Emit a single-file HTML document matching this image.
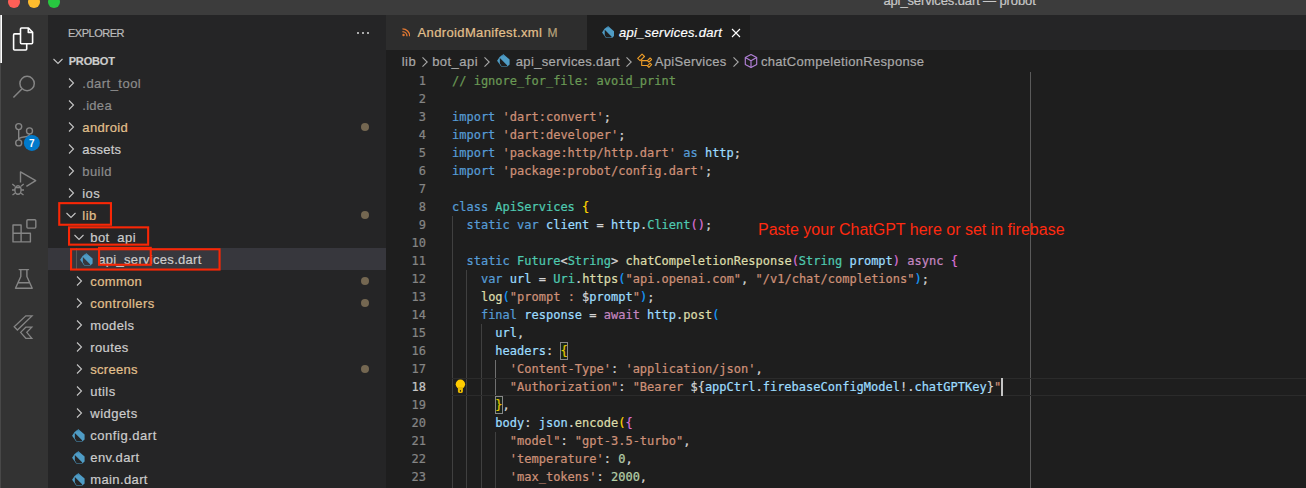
<!DOCTYPE html>
<html><head><meta charset="utf-8"><title>api_services.dart — probot</title>
<style>
*{box-sizing:border-box;margin:0;padding:0}
html,body{width:1306px;height:488px;overflow:hidden;background:#1e1e1e}
body{position:relative;font-family:"Liberation Sans",sans-serif;font-size:13px;color:#ccc;-webkit-text-stroke:0.2px}
.abs{position:absolute}
#titlebar{left:0;top:0;width:1306px;height:15px;background:#3c3c3c}
#title{left:883.4px;top:-7.5px;font-size:13px;line-height:16px;color:#c8c8c8;white-space:nowrap;letter-spacing:-0.12px}
.tl{width:12px;height:12px;border-radius:50%;top:-4px}
#activity{left:0;top:15px;width:48px;height:473px;background:#333333}
#sidebar{left:48px;top:15px;width:338px;height:473px;background:#252526}
#tabs{left:386px;top:15px;width:920px;height:35px;background:#252526}
.tab{top:0;height:35px;line-height:35px;white-space:nowrap}
#editor{left:386px;top:50px;width:920px;height:438px;background:#1e1e1e}
.row{left:0;width:338px;height:22px;line-height:22px;white-space:nowrap}
.row .lbl{position:absolute;top:1px}
.chev{position:absolute;top:3px;width:16px;height:16px}
.dot{position:absolute;left:313px;top:7px;width:8px;height:8px;border-radius:50%;background:#746751}
.g{color:#8c8c8c}.m{color:#e2c08d}.w{color:#cccccc}
#code{left:0;top:22px;width:920px;height:416px;font-family:"DejaVu Sans Mono","Liberation Mono",monospace;font-size:12px;line-height:18px;color:#d4d4d4;white-space:pre;-webkit-text-stroke:0.22px}
.ln{position:absolute;left:0;width:40px;text-align:right;color:#858585;height:18px}
.cl{position:absolute;left:66px;height:18px}
.k{color:#569cd6}.c{color:#c586c0}.s{color:#ce9178}.cm{color:#6a9955}.t{color:#4ec9b0}.f{color:#dcdcaa}.v{color:#9cdcfe}.n{color:#b5cea8}
.b1{color:#ffd700}.b2{color:#da70d6}.b3{color:#179fff}
.bm{outline:1px solid #888;outline-offset:-1px;background:rgba(0,100,0,.1)}
.guide{position:absolute;width:1px;background:#404040}
.bc{position:absolute;top:1px;height:22px;line-height:22px;color:#a9a9a9;white-space:nowrap}
.ann{position:absolute;border:2px solid #ee2c10}
</style></head><body>
<div id="titlebar" class="abs"></div>
<div class="abs tl" style="left:8px;background:#fe5f57"></div>
<div class="abs tl" style="left:28px;background:#febc2e"></div>
<div class="abs tl" style="left:48px;background:#28c840"></div>
<div id="title" class="abs">api_services.dart — probot</div>
<div id="activity" class="abs">
<div class="abs" style="left:0;top:0;width:1px;height:473px;background:#484848"></div><div class="abs" style="left:0;top:0;width:1px;height:48px;background:#c8c8c8"></div><div class="abs" style="left:1px;top:0;width:1px;height:48px;background:#fff"></div>
<svg class="abs" style="left:0;top:-15px" width="48" height="488" viewBox="0 0 48 488" fill="none">
<g stroke="#ffffff" stroke-width="1.6" stroke-linejoin="round"><path d="M21.5 28 H28.5 L32.6 32.2 V42.7 a1 1 0 0 1 -1 1 H21.5 a1 1 0 0 1 -1 -1 V29 a1 1 0 0 1 1 -1 Z"/><path d="M28.3 28 V32.4 H32.6"/><path d="M20.5 33.9 H14.6 a1 1 0 0 0 -1 1 V49 a1 1 0 0 0 1 1 H25.7 a1 1 0 0 0 1 -1 V43.7"/></g>
<g stroke="#858585" stroke-width="1.5"><circle cx="27.1" cy="83.5" r="7.2"/><path d="M21.9 88.9 L13.4 97.6"/></g>
<g stroke="#858585" stroke-width="1.4"><circle cx="18.7" cy="126.6" r="3"/><circle cx="18.7" cy="142.9" r="3"/><circle cx="29.5" cy="130.9" r="3"/><path d="M18.7 129.6 V139.9 M29.5 133.9 C29.5 138.8 18.7 135.2 18.7 139.9"/></g>
<circle cx="31.9" cy="142.9" r="8" fill="#007acc"/>
<text x="31.9" y="146.5" text-anchor="middle" font-family="Liberation Sans, sans-serif" font-size="10" font-weight="bold" fill="#ffffff">7</text>
<g stroke="#858585" stroke-width="1.4" stroke-linejoin="round"><path d="M20.5 182.5 V171.9 L35.7 180.6 L26.4 186.4"/><ellipse cx="18" cy="190" rx="3.1" ry="4.2"/><path d="M15.6 187.6 H20.4"/><path d="M15 186.2 L12.3 184 M21 186.2 L23.7 184 M14.9 190 H12 M21.1 190 H24 M15.3 193 L12.5 195 M20.7 193 L23.5 195"/></g>
<g stroke="#858585" stroke-width="1.4" stroke-linejoin="round"><path d="M13 225 H21.1 V233.2 H30.4 V241.9 H13 Z M13 233.2 H21.1 V241.9"/><rect x="26.9" y="219.7" width="8.9" height="8.4" rx="1"/></g>
<g stroke="#858585" stroke-width="1.4" stroke-linejoin="round" stroke-linecap="round"><path d="M19.2 269.6 H28.5 M20.8 269.6 V276.5 L15.5 288.2 H32.2 L26.9 276.5 V269.6 M18 282.8 H29.7"/></g>
<g stroke="#858585" stroke-width="1.3" stroke-linejoin="miter"><path d="M14.2 326.8 L25.8 315.9 H32 L17.4 330 Z"/><path d="M20.6 332.4 L25.8 327.2 H31.8 L26.8 332.4 L31.8 338.3 H25.8 Z"/></g>
</svg>
</div>
<div id="sidebar" class="abs">
<div class="abs" style="left:20px;top:10px;font-size:11px;line-height:16px;color:#bbbbbb;letter-spacing:-0.5px">EXPLORER</div>
<div class="abs" style="left:308.8px;top:16.9px;width:14px;height:4px"><i class="abs" style="left:0;top:0;width:2.4px;height:2.4px;border-radius:30%;background:#c5c5c5"></i><i class="abs" style="left:5px;top:0;width:2.4px;height:2.4px;border-radius:30%;background:#c5c5c5"></i><i class="abs" style="left:10px;top:0;width:2.4px;height:2.4px;border-radius:30%;background:#c5c5c5"></i></div>
<div class="abs row" style="top:35px"><svg class="chev" style="left:2px" viewBox="0 0 16 16"><path d="M3.5 6 L8 10.5 L12.5 6" fill="none" stroke="#c5c5c5" stroke-width="1.1"/></svg><span class="lbl" style="left:20.7px;top:0;font-size:11px;font-weight:bold;color:#cccccc;letter-spacing:-0.17px">PROBOT</span></div>
<div class="abs row" style="top:57px"><svg class="chev" style="left:15px" viewBox="0 0 16 16"><path d="M6 3.5 L10.5 8 L6 12.5" fill="none" stroke="#c5c5c5" stroke-width="1.1"/></svg><span class="lbl g" style="left:34.3px;letter-spacing:0.47px">.dart_tool</span></div>
<div class="abs row" style="top:79px"><svg class="chev" style="left:15px" viewBox="0 0 16 16"><path d="M6 3.5 L10.5 8 L6 12.5" fill="none" stroke="#c5c5c5" stroke-width="1.1"/></svg><span class="lbl g" style="left:34.3px;letter-spacing:0.28px">.idea</span></div>
<div class="abs row" style="top:101px"><svg class="chev" style="left:15px" viewBox="0 0 16 16"><path d="M6 3.5 L10.5 8 L6 12.5" fill="none" stroke="#c5c5c5" stroke-width="1.1"/></svg><span class="lbl m" style="left:34.3px;letter-spacing:0.35px">android</span><i class="dot"></i></div>
<div class="abs row" style="top:123px"><svg class="chev" style="left:15px" viewBox="0 0 16 16"><path d="M6 3.5 L10.5 8 L6 12.5" fill="none" stroke="#c5c5c5" stroke-width="1.1"/></svg><span class="lbl w" style="left:34.3px;letter-spacing:0.24px">assets</span></div>
<div class="abs row" style="top:145px"><svg class="chev" style="left:15px" viewBox="0 0 16 16"><path d="M6 3.5 L10.5 8 L6 12.5" fill="none" stroke="#c5c5c5" stroke-width="1.1"/></svg><span class="lbl g" style="left:34.3px;letter-spacing:0.43px">build</span></div>
<div class="abs row" style="top:167px"><svg class="chev" style="left:15px" viewBox="0 0 16 16"><path d="M6 3.5 L10.5 8 L6 12.5" fill="none" stroke="#c5c5c5" stroke-width="1.1"/></svg><span class="lbl w" style="left:34.3px;letter-spacing:0.39px">ios</span></div>
<div class="abs row" style="top:189px"><svg class="chev" style="left:15px" viewBox="0 0 16 16"><path d="M3.5 6 L8 10.5 L12.5 6" fill="none" stroke="#c5c5c5" stroke-width="1.1"/></svg><span class="lbl m" style="left:34.3px;letter-spacing:0.46px">lib</span><i class="dot"></i></div>
<div class="abs row" style="top:211px"><svg class="chev" style="left:23px" viewBox="0 0 16 16"><path d="M3.5 6 L8 10.5 L12.5 6" fill="none" stroke="#c5c5c5" stroke-width="1.1"/></svg><span class="lbl w" style="left:42.3px;letter-spacing:0.43px">bot_api</span></div>
<div class="abs row" style="top:233px;background:#37373d"><i class="abs" style="left:28px;top:0;width:1px;height:22px;background:#585858"></i><svg class="abs" style="left:31.5px;top:4.5px" width="13.0" height="13.0" viewBox="0 0 13 13"><path fill-rule="evenodd" fill="#4f9cc5" d="M6.45 0.3 L12.6 5.6 L12.6 10.4 L10.3 12.6 L4.2 12.5 L0.1 6.8 L2.6 2.9 Z M2.85 4.0 L10.3 11.5 L9.9 11.95 L4.5 11.9 L2.85 9.6 Z"/><path fill="#3b7fa6" d="M6.45 0.3 L8.6 2.2 L5.2 2.2 L3.6 1.9 Z" opacity="0.6"/></svg><span class="lbl w" style="left:50.3px;letter-spacing:0.30px">api_services.dart</span></div>
<div class="abs row" style="top:255px"><svg class="chev" style="left:23px" viewBox="0 0 16 16"><path d="M6 3.5 L10.5 8 L6 12.5" fill="none" stroke="#c5c5c5" stroke-width="1.1"/></svg><span class="lbl m" style="left:42.3px;letter-spacing:0.34px">common</span><i class="dot"></i></div>
<div class="abs row" style="top:277px"><svg class="chev" style="left:23px" viewBox="0 0 16 16"><path d="M6 3.5 L10.5 8 L6 12.5" fill="none" stroke="#c5c5c5" stroke-width="1.1"/></svg><span class="lbl m" style="left:42.3px;letter-spacing:0.39px">controllers</span><i class="dot"></i></div>
<div class="abs row" style="top:299px"><svg class="chev" style="left:23px" viewBox="0 0 16 16"><path d="M6 3.5 L10.5 8 L6 12.5" fill="none" stroke="#c5c5c5" stroke-width="1.1"/></svg><span class="lbl w" style="left:42.3px;letter-spacing:0.35px">models</span></div>
<div class="abs row" style="top:321px"><svg class="chev" style="left:23px" viewBox="0 0 16 16"><path d="M6 3.5 L10.5 8 L6 12.5" fill="none" stroke="#c5c5c5" stroke-width="1.1"/></svg><span class="lbl w" style="left:42.3px;letter-spacing:0.38px">routes</span></div>
<div class="abs row" style="top:343px"><svg class="chev" style="left:23px" viewBox="0 0 16 16"><path d="M6 3.5 L10.5 8 L6 12.5" fill="none" stroke="#c5c5c5" stroke-width="1.1"/></svg><span class="lbl m" style="left:42.3px;letter-spacing:0.27px">screens</span><i class="dot"></i></div>
<div class="abs row" style="top:365px"><svg class="chev" style="left:23px" viewBox="0 0 16 16"><path d="M6 3.5 L10.5 8 L6 12.5" fill="none" stroke="#c5c5c5" stroke-width="1.1"/></svg><span class="lbl w" style="left:42.3px;letter-spacing:0.44px">utils</span></div>
<div class="abs row" style="top:387px"><svg class="chev" style="left:23px" viewBox="0 0 16 16"><path d="M6 3.5 L10.5 8 L6 12.5" fill="none" stroke="#c5c5c5" stroke-width="1.1"/></svg><span class="lbl w" style="left:42.3px;letter-spacing:0.47px">widgets</span></div>
<div class="abs row" style="top:409px"><svg class="abs" style="left:23.5px;top:4.5px" width="13.0" height="13.0" viewBox="0 0 13 13"><path fill-rule="evenodd" fill="#4f9cc5" d="M6.45 0.3 L12.6 5.6 L12.6 10.4 L10.3 12.6 L4.2 12.5 L0.1 6.8 L2.6 2.9 Z M2.85 4.0 L10.3 11.5 L9.9 11.95 L4.5 11.9 L2.85 9.6 Z"/><path fill="#3b7fa6" d="M6.45 0.3 L8.6 2.2 L5.2 2.2 L3.6 1.9 Z" opacity="0.6"/></svg><span class="lbl w" style="left:42.3px;letter-spacing:0.53px">config.dart</span></div>
<div class="abs row" style="top:431px"><svg class="abs" style="left:23.5px;top:4.5px" width="13.0" height="13.0" viewBox="0 0 13 13"><path fill-rule="evenodd" fill="#4f9cc5" d="M6.45 0.3 L12.6 5.6 L12.6 10.4 L10.3 12.6 L4.2 12.5 L0.1 6.8 L2.6 2.9 Z M2.85 4.0 L10.3 11.5 L9.9 11.95 L4.5 11.9 L2.85 9.6 Z"/><path fill="#3b7fa6" d="M6.45 0.3 L8.6 2.2 L5.2 2.2 L3.6 1.9 Z" opacity="0.6"/></svg><span class="lbl w" style="left:42.3px;letter-spacing:0.40px">env.dart</span></div>
<div class="abs row" style="top:453px"><svg class="abs" style="left:23.5px;top:4.5px" width="13.0" height="13.0" viewBox="0 0 13 13"><path fill-rule="evenodd" fill="#4f9cc5" d="M6.45 0.3 L12.6 5.6 L12.6 10.4 L10.3 12.6 L4.2 12.5 L0.1 6.8 L2.6 2.9 Z M2.85 4.0 L10.3 11.5 L9.9 11.95 L4.5 11.9 L2.85 9.6 Z"/><path fill="#3b7fa6" d="M6.45 0.3 L8.6 2.2 L5.2 2.2 L3.6 1.9 Z" opacity="0.6"/></svg><span class="lbl w" style="left:42.3px;letter-spacing:0.37px">main.dart</span></div>
<svg class="abs" style="left:0;top:0" width="338" height="473" viewBox="48 15 338 473" fill="none" stroke="#f92706" stroke-width="2.1"><rect x="59.25" y="203.15" width="51.70" height="21.60"/><rect x="69.05" y="227.35" width="79.10" height="17.30"/><rect x="71.05" y="249.25" width="148.50" height="20.30"/><rect x="99.05" y="247.85" width="51.70" height="16.90"/></svg>
</div>
<div id="tabs" class="abs">
<div class="abs tab" style="left:0;width:201px;background:#2d2d2d"><svg class="abs" style="left:15.6px;top:13.4px" width="8.6" height="8.6" viewBox="0 0 10 10"><circle cx="1.8" cy="8.2" r="1.4" fill="#e37933"/><path d="M0.5 4.2 A5.3 5.3 0 0 1 5.8 9.5 M0.5 1 A8.5 8.5 0 0 1 9 9.5" fill="none" stroke="#e37933" stroke-width="1.6"/></svg><span class="abs" style="left:31.6px;top:0;color:#e2c08d;letter-spacing:0.36px">AndroidManifest.xml</span><span class="abs" style="left:161.4px;top:1px;color:#b7a27b;font-size:12px">M</span></div>
<div class="abs tab" style="left:201px;width:163px;background:#1e1e1e"><svg class="abs" style="left:14.6px;top:10.6px" width="12.5" height="12.5" viewBox="0 0 13 13"><path fill-rule="evenodd" fill="#4f9cc5" d="M6.45 0.3 L12.6 5.6 L12.6 10.4 L10.3 12.6 L4.2 12.5 L0.1 6.8 L2.6 2.9 Z M2.85 4.0 L10.3 11.5 L9.9 11.95 L4.5 11.9 L2.85 9.6 Z"/><path fill="#3b7fa6" d="M6.45 0.3 L8.6 2.2 L5.2 2.2 L3.6 1.9 Z" opacity="0.6"/></svg><span class="abs" style="left:32px;top:0;color:#ffffff;font-style:italic;letter-spacing:0.29px">api_services.dart</span><svg class="abs" style="left:140.5px;top:9.8px" width="16" height="16" viewBox="0 0 16 16"><path d="M4 4 L12 12 M12 4 L4 12" stroke="#ffffff" stroke-width="1.1" fill="none"/></svg></div>
</div>
<div id="editor" class="abs">
<span class="bc" style="left:15.7px;letter-spacing:0.49px">lib</span>
<svg class="abs" style="left:31.4px;top:4px" width="16" height="16" viewBox="0 0 16 16"><path d="M5.5 3.4 L10.2 8 L5.5 12.6" fill="none" stroke="#a8a8a8" stroke-width="1.1"/></svg>
<span class="bc" style="left:46.2px;letter-spacing:0.45px">bot_api</span>
<svg class="abs" style="left:92.9px;top:4px" width="16" height="16" viewBox="0 0 16 16"><path d="M5.5 3.4 L10.2 8 L5.5 12.6" fill="none" stroke="#a8a8a8" stroke-width="1.1"/></svg>
<svg class="abs" style="left:111.2px;top:4.4px" width="13.0" height="13.0" viewBox="0 0 13 13"><path fill-rule="evenodd" fill="#4f9cc5" d="M6.45 0.3 L12.6 5.6 L12.6 10.4 L10.3 12.6 L4.2 12.5 L0.1 6.8 L2.6 2.9 Z M2.85 4.0 L10.3 11.5 L9.9 11.95 L4.5 11.9 L2.85 9.6 Z"/><path fill="#3b7fa6" d="M6.45 0.3 L8.6 2.2 L5.2 2.2 L3.6 1.9 Z" opacity="0.6"/></svg>
<span class="bc" style="left:129.8px;letter-spacing:0.34px">api_services.dart</span>
<svg class="abs" style="left:234.8px;top:4px" width="16" height="16" viewBox="0 0 16 16"><path d="M5.5 3.4 L10.2 8 L5.5 12.6" fill="none" stroke="#a8a8a8" stroke-width="1.1"/></svg>
<svg class="abs" style="left:250.6px;top:3px" width="16" height="16" viewBox="0 0 16 16"><g fill="none" stroke="#ee9d28" stroke-width="1.1" stroke-linejoin="round"><path d="M5.05 1.1 L7.5 3.5 L3.1 7.7 L0.7 5.4 Z"/><path d="M4.7 6.2 V12.5 H10.6 M4.7 7.6 H10.6"/><path d="M13.1 5 L14.6 6.5 L11.9 9.2 L10.4 7.7 Z"/><path d="M13.1 10.2 L14.6 11.7 L11.9 14.4 L10.4 12.9 Z"/></g></svg>
<span class="bc" style="left:268.8px;letter-spacing:0.29px">ApiServices</span>
<svg class="abs" style="left:341.9px;top:4px" width="16" height="16" viewBox="0 0 16 16"><path d="M5.5 3.4 L10.2 8 L5.5 12.6" fill="none" stroke="#a8a8a8" stroke-width="1.1"/></svg>
<svg class="abs" style="left:357.0px;top:3px" width="16" height="16" viewBox="0 0 16 16"><g fill="none" stroke="#b180d7" stroke-width="1.15" stroke-linejoin="round"><path d="M8 1.6 L13.7 4.6 L13.7 11.4 L8 14.6 L2.3 11.4 L2.3 4.6 Z"/><path d="M2.3 4.6 L8 7.8 L13.7 4.6 M8 7.8 V14.6"/></g></svg>
<span class="bc" style="left:374.9px;letter-spacing:0.32px">chatCompeletionResponse</span>
<div id="code" class="abs">
<div class="guide" style="left:643.9px;top:0;height:416px;background:#5a5a5a"></div>
<div class="guide" style="left:66.0px;top:144px;height:288px;background:#404040"></div>
<div class="guide" style="left:80.4px;top:198px;height:234px;background:#404040"></div>
<div class="guide" style="left:94.9px;top:252px;height:180px;background:#404040"></div>
<div class="guide" style="left:109.3px;top:288px;height:36px;background:#707070"></div>
<div class="guide" style="left:109.3px;top:360px;height:72px;background:#404040"></div>
<div class="ln" style="top:0px;color:#858585">1</div>
<div class="cl" style="top:0px"><span class="cm">// ignore_for_file: avoid_print</span></div>
<div class="ln" style="top:18px;color:#858585">2</div>
<div class="ln" style="top:36px;color:#858585">3</div>
<div class="cl" style="top:36px"><span class="k">import</span> <span class="s">'dart:convert'</span>;</div>
<div class="ln" style="top:54px;color:#858585">4</div>
<div class="cl" style="top:54px"><span class="k">import</span> <span class="s">'dart:developer'</span>;</div>
<div class="ln" style="top:72px;color:#858585">5</div>
<div class="cl" style="top:72px"><span class="k">import</span> <span class="s">'package:http/http.dart'</span> <span class="k">as</span> <span class="v">http</span>;</div>
<div class="ln" style="top:90px;color:#858585">6</div>
<div class="cl" style="top:90px"><span class="k">import</span> <span class="s">'package:probot/config.dart'</span>;</div>
<div class="ln" style="top:108px;color:#858585">7</div>
<div class="ln" style="top:126px;color:#858585">8</div>
<div class="cl" style="top:126px"><span class="k">class</span> <span class="t">ApiServices</span> <span class="b1">{</span></div>
<div class="ln" style="top:144px;color:#858585">9</div>
<div class="cl" style="top:144px">  <span class="k">static</span> <span class="k">var</span> <span class="v">client</span> = <span class="v">http</span>.<span class="t">Client</span><span class="b2">()</span>;</div>
<div class="ln" style="top:162px;color:#858585">10</div>
<div class="ln" style="top:180px;color:#858585">11</div>
<div class="cl" style="top:180px">  <span class="k">static</span> <span class="t">Future</span>&lt;<span class="t">String</span>&gt; <span class="f">chatCompeletionResponse</span><span class="b2">(</span><span class="t">String</span> <span class="v">prompt</span><span class="b2">)</span> <span class="c">async</span> <span class="b2">{</span></div>
<div class="ln" style="top:198px;color:#858585">12</div>
<div class="cl" style="top:198px">    <span class="k">var</span> <span class="v">url</span> = <span class="t">Uri</span>.<span class="f">https</span><span class="b3">(</span><span class="s">"api.openai.com"</span>, <span class="s">"/v1/chat/completions"</span><span class="b3">)</span>;</div>
<div class="ln" style="top:216px;color:#858585">13</div>
<div class="cl" style="top:216px">    <span class="f">log</span><span class="b3">(</span><span class="s">"prompt : </span>$<span class="v">prompt</span><span class="s">"</span><span class="b3">)</span>;</div>
<div class="ln" style="top:234px;color:#858585">14</div>
<div class="cl" style="top:234px">    <span class="k">final</span> <span class="v">response</span> = <span class="c">await</span> <span class="v">http</span>.<span class="f">post</span><span class="b3">(</span></div>
<div class="ln" style="top:252px;color:#858585">15</div>
<div class="cl" style="top:252px">      <span class="v">url</span>,</div>
<div class="ln" style="top:270px;color:#858585">16</div>
<div class="cl" style="top:270px">      <span class="v">headers</span>: <span class="b1">{</span></div>
<div class="ln" style="top:288px;color:#858585">17</div>
<div class="cl" style="top:288px">        <span class="s">'Content-Type'</span>: <span class="s">'application/json'</span>,</div>
<div class="ln" style="top:306px;color:#c6c6c6">18</div>
<div class="cl" style="top:306px">        <span class="s">"Authorization"</span>: <span class="s">"Bearer </span>${<span class="v">appCtrl</span>.<span class="v">firebaseConfigModel</span>!.<span class="v">chatGPTKey</span>}<span class="s">"</span></div>
<div class="ln" style="top:324px;color:#858585">19</div>
<div class="cl" style="top:324px">      <span class="b1">}</span>,</div>
<div class="ln" style="top:342px;color:#858585">20</div>
<div class="cl" style="top:342px">      <span class="v">body</span>: <span class="v">json</span>.<span class="f">encode</span><span class="b1">(</span><span class="b2">{</span></div>
<div class="ln" style="top:360px;color:#858585">21</div>
<div class="cl" style="top:360px">        <span class="s">"model"</span>: <span class="s">"gpt-3.5-turbo"</span>,</div>
<div class="ln" style="top:378px;color:#858585">22</div>
<div class="cl" style="top:378px">        <span class="s">'temperature'</span>: <span class="n">0</span>,</div>
<div class="ln" style="top:396px;color:#858585">23</div>
<div class="cl" style="top:396px">        <span class="s">'max_tokens'</span>: <span class="n">2000</span>,</div>
<div class="abs" style="left:66px;top:306px;width:854px;height:18px;border-top:1px solid #2b2b2b;border-bottom:1px solid #2b2b2b"></div>
<div class="abs" style="left:174.1px;top:270px;width:7.6px;height:18px;border:1px solid #888;background:rgba(0,100,0,.1)"></div>
<div class="abs" style="left:109.0px;top:324px;width:7.6px;height:18px;border:1px solid #888;background:rgba(0,100,0,.1)"></div>
<div class="abs" style="left:615.0px;top:306px;width:2px;height:18px;background:#c4c4c4"></div>
<svg class="abs" style="left:68px;top:306.6px" width="14" height="18" viewBox="0 0 14 18"><circle cx="6.4" cy="5.3" r="4.7" fill="#ffcc00"/><path fill-rule="evenodd" d="M3.9 8 H8.9 V12.6 a1.4 1.4 0 0 1 -1.4 1.4 H5.3 a1.4 1.4 0 0 1 -1.4 -1.4 Z M5.9 11 h1 v1.7 h-1 Z" fill="#e6b800"/></svg>
</div>
<div class="abs" style="left:372px;top:170px;font-size:16px;line-height:20px;color:#ff2a10;white-space:nowrap;-webkit-text-stroke:0">Paste your ChatGPT here or set in firebase</div>
</div>
</body></html>
